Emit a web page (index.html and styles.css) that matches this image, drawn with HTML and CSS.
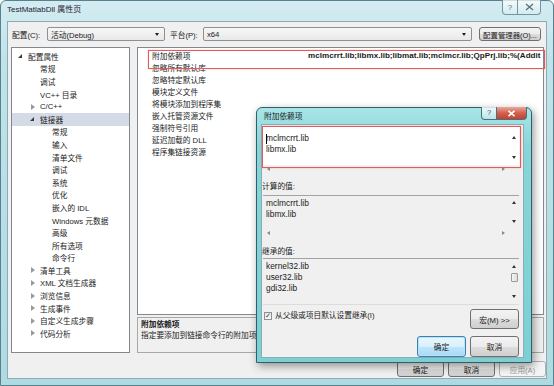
FILE: index.html
```html
<!DOCTYPE html>
<html lang="zh-CN">
<head>
    <meta charset="UTF-8">
    <title>TestMatlabDll 属性页</title>
    <link rel="stylesheet" href="styles.css">
</head>
<body>
<div class="window">
    <div class="titlebar">
        <span class="title">TestMatlabDll 属性页</span>
        <div class="caption">
            <span class="cap-btn cap-help">?</span>
            <span class="cap-btn cap-close">
                <svg width="9" height="8" viewBox="0 0 9 8"><path d="M1 1L8 7M8 1L1 7" stroke="#55707c" stroke-width="1.3" fill="none"/></svg>
            </span>
        </div>
    </div>
    <div class="client">
        <div class="config-row">
            <span class="label label-config">配置(C):</span>
            <div class="combo combo-config"><span>活动(Debug)</span><i class="drop"></i></div>
            <span class="label label-platform">平台(P):</span>
            <div class="combo combo-platform"><span>x64</span><i class="drop"></i></div>
            <button class="btn btn-manager">配置管理器(O)...</button>
        </div>

        <div class="panes">
            <ul class="tree">
                <li class="lv0 open"><i class="tw"></i>配置属性</li>
                <li class="lv1"><i class="tw"></i>常规</li>
                <li class="lv1"><i class="tw"></i>调试</li>
                <li class="lv1"><i class="tw"></i>VC++ 目录</li>
                <li class="lv1 closed"><i class="tw"></i>C/C++</li>
                <li class="lv1 open selected"><i class="tw"></i>链接器</li>
                <li class="lv2"><i class="tw"></i>常规</li>
                <li class="lv2"><i class="tw"></i>输入</li>
                <li class="lv2"><i class="tw"></i>清单文件</li>
                <li class="lv2"><i class="tw"></i>调试</li>
                <li class="lv2"><i class="tw"></i>系统</li>
                <li class="lv2"><i class="tw"></i>优化</li>
                <li class="lv2"><i class="tw"></i>嵌入的 IDL</li>
                <li class="lv2"><i class="tw"></i>Windows 元数据</li>
                <li class="lv2"><i class="tw"></i>高级</li>
                <li class="lv2"><i class="tw"></i>所有选项</li>
                <li class="lv2"><i class="tw"></i>命令行</li>
                <li class="lv1 closed"><i class="tw"></i>清单工具</li>
                <li class="lv1 closed"><i class="tw"></i>XML 文档生成器</li>
                <li class="lv1 closed"><i class="tw"></i>浏览信息</li>
                <li class="lv1 closed"><i class="tw"></i>生成事件</li>
                <li class="lv1 closed"><i class="tw"></i>自定义生成步骤</li>
                <li class="lv1 closed"><i class="tw"></i>代码分析</li>
            </ul>

            <div class="props">
                <div class="grid">
                    <div class="row"><span class="name">附加依赖项</span><span class="value">mclmcrrt.lib;libmx.lib;libmat.lib;mclmcr.lib;QpPrj.lib;%(Addit</span></div>
                    <div class="row"><span class="name">忽略所有默认库</span></div>
                    <div class="row"><span class="name">忽略特定默认库</span></div>
                    <div class="row"><span class="name">模块定义文件</span></div>
                    <div class="row"><span class="name">将模块添加到程序集</span></div>
                    <div class="row"><span class="name">嵌入托管资源文件</span></div>
                    <div class="row"><span class="name">强制符号引用</span></div>
                    <div class="row"><span class="name">延迟加载的 DLL</span></div>
                    <div class="row"><span class="name">程序集链接资源</span></div>
                </div>
                <div class="desc">
                    <b>附加依赖项</b>
                    <p>指定要添加到链接命令行的附加项。[例如 kernel32.lib]</p>
                </div>
            </div>
        </div>

        <div class="buttons">
            <button class="btn">确定</button>
            <button class="btn">取消</button>
            <button class="btn" disabled>应用(A)</button>
        </div>
    </div>
</div>

<!-- red annotation boxes drawn over the screenshot -->
<div class="mark mark-main"></div>

<div class="dialog">
    <div class="dlg-title">
        <span>附加依赖项</span>
        <div class="dlg-caption">
            <span class="dcap dcap-help">?</span>
            <span class="dcap dcap-close">
                <svg width="9" height="7" viewBox="0 0 9 7"><path d="M1.5 0.8L7.5 6.2M7.5 0.8L1.5 6.2" stroke="#fff" stroke-width="1.6" fill="none"/></svg>
            </span>
        </div>
    </div>
    <div class="dlg-body">
        <div class="box box-edit">
            <div class="text"><i class="caret"></i><div class="lat">mclmcrrt.lib</div><div class="lat">libmx.lib</div></div>
            <div class="vscroll"><i class="up"></i><i class="down"></i></div>
            <div class="hscroll"><i class="left"></i><i class="right"></i></div>
        </div>

        <div class="dlg-label">计算的值:</div>
        <div class="box box-computed">
            <div class="text"><div class="lat">mclmcrrt.lib</div><div class="lat">libmx.lib</div></div>
            <div class="vscroll"><i class="up"></i><i class="down"></i></div>
            <div class="hscroll"><i class="left"></i><i class="right"></i></div>
        </div>

        <div class="dlg-label">继承的值:</div>
        <div class="box box-inherited">
            <div class="text"><div class="lat">kernel32.lib</div><div class="lat">user32.lib</div><div class="lat">gdi32.lib</div></div>
            <div class="vscroll"><i class="up"></i><i class="thumb"></i><i class="down"></i></div>
        </div>

        <div class="inherit-row">
            <label class="check"><i class="checkbox">✓</i>从父级或项目默认设置继承(I)</label>
            <button class="btn btn-macro">宏(M) &gt;&gt;</button>
        </div>

        <div class="dlg-buttons">
            <button class="btn btn-default">确定</button>
            <button class="btn">取消</button>
        </div>
    </div>
</div>
<div class="mark mark-dialog"></div>
</body>
</html>
```

FILE: styles.css
```css
body {
    margin: 0;
    width: 554px;
    height: 386px;
    overflow: hidden;
    position: relative;
    font-family: "Liberation Sans", "Noto Sans CJK SC", sans-serif;
    font-size: 7.7px;
    color: #1b1b1b;
    background: #fff;
}
ul, p {
    margin: 0;
    padding: 0;
}
i {
    font-style: normal;
}
.lat {
    font-size: 8.4px;
}

/* main window frame */
.window {
    width: 554px;
    height: 386px;
    box-sizing: border-box;
    border: 1px solid #58808f;
    border-radius: 6px 6px 0 0;
    background: linear-gradient(#d4ecf1, #bfe3e9 60px, #aedbe1);
    display: flex;
    flex-direction: column;
}
.titlebar {
    height: 20px;
    flex: none;
    position: relative;
}
.title {
    display: block;
    padding: 4px 0 0 6px;
    font-size: 8px;
    line-height: 10px;
    color: #223;
}
.caption {
    position: absolute;
    right: 12px;
    top: -1px;
    display: flex;
}
.cap-btn {
    height: 15px;
    box-sizing: border-box;
    border: 1px solid #7593a1;
    border-top: none;
    background: linear-gradient(rgba(255,255,255,.75), rgba(214,236,241,.6));
    display: flex;
    align-items: center;
    justify-content: center;
    color: #55707c;
    font-size: 8px;
}
.cap-help {
    width: 16px;
    border-radius: 0 0 0 4px;
}
.cap-close {
    width: 23px;
    border-left: none;
    border-radius: 0 0 4px 0;
}

.client {
    flex: 1;
    margin: 0 6px 6px 6px;
    background: #f0f0f0;
    border: 1px solid #8eaab6;
    display: flex;
    flex-direction: column;
}

/* configuration row */
.config-row {
    display: flex;
    align-items: center;
    height: 14px;
    margin-top: 5px;
    padding-left: 4px;
}
.label-config {
    width: 35px;
}
.label-platform {
    width: 33px;
    margin-left: 5px;
}
.combo {
    height: 14px;
    box-sizing: border-box;
    border: 1px solid #8e8f8f;
    border-radius: 2px;
    background: linear-gradient(#f7f7f7, #e8e8e8);
    display: flex;
    align-items: center;
    padding-left: 3px;
    position: relative;
}
.combo-config {
    width: 118px;
}
.combo-platform {
    width: 269px;
}
.drop {
    position: absolute;
    right: 5px;
    top: 5px;
    border-left: 2.5px solid transparent;
    border-right: 2.5px solid transparent;
    border-top: 3px solid #222;
}
.btn {
    font: inherit;
    color: #1b1b1b;
    padding: 0;
    box-sizing: border-box;
    border: 1px solid #707070;
    border-radius: 3px;
    background: linear-gradient(#f3f3f3, #ebebeb 50%, #dddddd 51%, #cfcfcf);
}
.btn:disabled {
    color: #9a9a9a;
    border-color: #adb2b5;
    background: #f4f4f4;
}
.btn-manager {
    width: 62px;
    height: 14px;
    margin-left: 7px;
    font-size: 7.4px;
}

/* tree + property grid */
.panes {
    display: flex;
    margin-top: 6px;
    height: 306px;
}
.tree {
    list-style: none;
    width: 119px;
    margin-left: 3px;
    box-sizing: border-box;
    border: 1px solid #828790;
    background: #fff;
    padding-top: 2px;
}
.tree li {
    height: 12.6px;
    display: flex;
    align-items: center;
    white-space: nowrap;
}
.tree .lv0 { padding-left: 5px; }
.tree .lv1 { padding-left: 17px; }
.tree .lv2 { padding-left: 29px; }
.tree .selected {
    background: #d5dbe6;
}
.tw {
    width: 11px;
    flex: none;
    display: flex;
    align-items: center;
}
.open .tw::before {
    content: "";
    margin-left: 1px;
    border-left: 4px solid transparent;
    border-bottom: 4px solid #3a3a3a;
}
.closed .tw::before {
    content: "";
    margin-left: 2px;
    border-top: 3px solid transparent;
    border-bottom: 3px solid transparent;
    border-left: 4px solid #9a9a9a;
}

.props {
    width: 407px;
    margin-left: 7px;
    display: flex;
    flex-direction: column;
}
.grid {
    flex: 1;
    border: 1px solid #828790;
    background: #fff;
    padding-top: 1px;
    overflow: hidden;
}
.row {
    height: 12px;
    display: flex;
    align-items: center;
    padding-left: 14px;
    white-space: nowrap;
}
.name {
    width: 156px;
    flex: none;
}
.value {
    font-weight: bold;
    font-size: 8.1px;
}
.desc {
    height: 36px;
    margin-top: 2px;
    box-sizing: border-box;
    border: 1px solid #a8a8a8;
    background: #f0f0f0;
    padding: 1px 3px;
    line-height: 11px;
    white-space: nowrap;
    overflow: hidden;
}
.desc b {
    display: block;
}

.buttons {
    display: flex;
    justify-content: flex-end;
    gap: 4px;
    margin-top: 8px;
    padding-right: 0;
}
.buttons .btn {
    width: 47px;
    height: 16px;
}

/* red annotations */
.mark {
    position: absolute;
    border: 1px solid #e25b5b;
    box-shadow: 0 0 2px rgba(230, 80, 80, .35);
    pointer-events: none;
}
.mark-main {
    left: 148px;
    top: 50px;
    width: 395px;
    height: 17px;
}
.mark-dialog {
    left: 262px;
    top: 126px;
    width: 257px;
    height: 40px;
}

/* 附加依赖项 dialog */
.dialog {
    position: absolute;
    left: 256px;
    top: 107px;
    width: 276px;
    height: 256px;
    box-sizing: border-box;
    border: 1px solid #2f5f6a;
    border-radius: 6px 6px 0 0;
    background: linear-gradient(#a9e5e7, #87d5d8 40px, #7ccfd3);
    box-shadow: 2px 3px 8px rgba(0, 0, 0, .4);
    padding: 0 7px 5px 4px;
    display: flex;
    flex-direction: column;
}
.dlg-title {
    height: 16px;
    flex: none;
    position: relative;
    padding: 4px 0 0 3px;
    box-sizing: border-box;
    line-height: 10px;
}
.dlg-caption {
    position: absolute;
    right: -3px;
    top: -1px;
    display: flex;
}
.dcap {
    height: 13px;
    box-sizing: border-box;
    border: 1px solid #4f6f78;
    border-top: none;
    display: flex;
    align-items: center;
    justify-content: center;
}
.dcap-help {
    width: 16px;
    border-radius: 0 0 0 4px;
    background: linear-gradient(rgba(255,255,255,.8), rgba(200,232,236,.6));
    font-size: 7.5px;
    color: #3d5560;
}
.dcap-close {
    width: 30px;
    border-left: none;
    border-radius: 0 0 4px 0;
    background: linear-gradient(#eaa89c, #d2604f 50%, #c24232);
}
.dlg-body {
    flex: 1;
    background: #f0f0f0;
    border: 1px solid #8eaab6;
    padding: 0 3px 0 0;
    display: flex;
    flex-direction: column;
}

.box {
    display: grid;
    grid-template-columns: 1fr 10px;
    grid-template-rows: 1fr 8px;
    width: 256px;
    margin-left: 1px;
    line-height: 11px;
}
.box .text {
    padding: 2px 0 0 3px;
    position: relative;
}
.box-edit {
    margin-top: 2px;
    height: 46px;
}
.box-edit .text,
.box-edit .vscroll {
    background: #fff;
}
.box-edit .text {
    padding-top: 6px;
}
.caret {
    position: absolute;
    left: 3px;
    top: 7px;
    width: 1px;
    height: 10px;
    background: #000;
}
.box-computed {
    height: 41px;
    margin-top: 2px;
    border-top: 1px solid #a3a3a3;
}
.box-inherited {
    height: 45px;
    grid-template-rows: 1fr;
    border-top: 1px solid #a3a3a3;
    border-bottom: 1px solid #dcdcdc;
}
.vscroll {
    display: flex;
    flex-direction: column;
    align-items: center;
    justify-content: space-between;
    padding: 9px 0 6px;
}
.box-computed .vscroll {
    padding: 5px 0 6px;
}
.box-inherited .vscroll {
    padding: 6px 0 6px;
}
.thumb {
    width: 7px;
    height: 9px;
    box-sizing: border-box;
    border: 1px solid #9a9a9a;
    border-radius: 1px;
    background: linear-gradient(90deg, #f4f4f4, #dedede);
    margin-top: -8px;
}
.hscroll {
    display: flex;
    align-items: center;
    justify-content: space-between;
    padding: 0 4px;
}
.up, .down, .left, .right {
    width: 0;
    height: 0;
}
.up {
    border-left: 2px solid transparent;
    border-right: 2px solid transparent;
    border-bottom: 3px solid #333;
}
.down {
    border-left: 2px solid transparent;
    border-right: 2px solid transparent;
    border-top: 3px solid #333;
}
.left {
    border-top: 2px solid transparent;
    border-bottom: 2px solid transparent;
    border-right: 3px solid #888;
}
.right {
    border-top: 2px solid transparent;
    border-bottom: 2px solid transparent;
    border-left: 3px solid #888;
}
.dlg-label {
    height: 13px;
    line-height: 13px;
    margin-top: 7px;
}
.box-computed + .dlg-label {
    margin-top: 8px;
}

.inherit-row {
    display: flex;
    justify-content: space-between;
    align-items: flex-start;
    margin-top: 4px;
}
.check {
    display: flex;
    align-items: center;
    gap: 3px;
    margin-top: 2px;
    margin-left: 2px;
    line-height: 10px;
}
.checkbox {
    width: 8px;
    height: 8px;
    box-sizing: border-box;
    border: 1px solid #8f8f8f;
    background: linear-gradient(#e6e6e6, #fbfbfb);
    font-size: 7px;
    line-height: 6px;
    text-align: center;
    color: #2a3a5a;
    font-family: "DejaVu Sans", sans-serif;
}
.btn-macro {
    width: 49px;
    height: 20px;
    margin-right: 1px;
}
.dlg-buttons {
    display: flex;
    justify-content: flex-end;
    gap: 4px;
    margin-top: 7px;
    padding-right: 1px;
}
.dlg-buttons .btn {
    width: 49px;
    height: 21px;
}
.btn-default {
    border-color: #3c7fb1;
    background: linear-gradient(#eaf6fd, #d9f0fc 50%, #bee6fd 51%, #a7d9f5);
    box-shadow: inset 0 0 0 1px #b6e3fa;
}
```
